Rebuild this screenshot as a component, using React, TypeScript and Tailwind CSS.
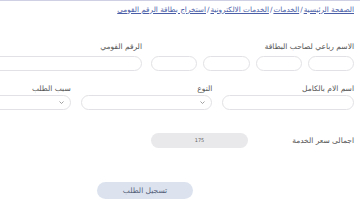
import React from "react";

const Input = ({ className = "" }: { className?: string }) => (
  <div className={`h-[15px] rounded-full border border-[#e2e2e6] bg-white ${className}`} />
);

const Select = () => (
  <div className="h-[15px] rounded-full border border-[#e2e2e6] bg-white flex items-center justify-start pr-[6px]">
    <svg width="5" height="3" viewBox="0 0 5 3" className="text-[#888]">
      <path d="M0.5 0.5 L2.5 2.5 L4.5 0.5" fill="none" stroke="currentColor" strokeWidth="0.8" />
    </svg>
  </div>
);

const crumbs = ["الصفحة الرئيسية", "الخدمات", "الخدمات الالكترونية", "استخراج بطاقة الرقم القومي"];

export default function App() {
  const font = { fontFamily: '"DejaVu Sans", sans-serif' };
  return (
    <div className="w-[360px] h-[200px] overflow-hidden bg-white border-t border-[#cfd0e4]" style={font}>
      <div dir="rtl" className="w-[415px] ml-[-61px] pr-[6px] box-content">
        <div className="pt-[3px] h-[14px] overflow-hidden flex items-center text-[7.3px] leading-[10px] text-[#4a5ea8]">
          {crumbs.map((c, i) => (
            <React.Fragment key={i}>
              {i > 0 && <span className="px-[1px]">/</span>}
              <span className="underline whitespace-nowrap shrink-0">{c}</span>
            </React.Fragment>
          ))}
        </div>

        <div className="grid grid-cols-2 gap-x-[9px] mt-[28px]">
          <div>
            <div className="text-[7.5px] leading-[8px] text-[#555] h-[8px] whitespace-nowrap">الاسم رباعي لصاحب البطاقة</div>
            <div className="grid grid-cols-4 gap-x-[6px] mt-[5px]">
              <Input />
              <Input />
              <Input />
              <Input />
            </div>
          </div>
          <div>
            <div className="text-[7.5px] leading-[8px] text-[#555] h-[8px] whitespace-nowrap">الرقم القومي</div>
            <div className="mt-[5px]">
              <Input />
            </div>
          </div>
        </div>

        <div className="grid grid-cols-3 gap-x-[10px] mt-[14px]">
          <div>
            <div className="text-[7.5px] leading-[8px] text-[#555] h-[8px] whitespace-nowrap">اسم الام بالكامل</div>
            <div className="mt-[2px]"><Input /></div>
          </div>
          <div>
            <div className="text-[7.5px] leading-[8px] text-[#555] h-[8px] whitespace-nowrap">النوع</div>
            <div className="mt-[2px]"><Select /></div>
          </div>
          <div>
            <div className="text-[7.5px] leading-[8px] text-[#555] h-[8px] whitespace-nowrap">سبب الطلب</div>
            <div className="mt-[2px]"><Select /></div>
          </div>
        </div>

        <div className="flex items-center mt-[23px]">
          <div className="w-[106px] text-[7.5px] leading-[8px] text-[#555] whitespace-nowrap">اجمالى سعر الخدمة</div>
          <div className="w-[97px] h-[15px] rounded-full bg-[#e9e9ec] flex items-center justify-center text-[5px] text-[#666]">175</div>
        </div>

        <div className="flex justify-center mt-[34px] pr-[3px]">
          <div className="w-[96px] h-[17px] rounded-full bg-[#dce3ef] flex items-center justify-center text-[7.5px] text-[#55617a]">
            تسجيل الطلب
          </div>
        </div>
      </div>
    </div>
  );
}
